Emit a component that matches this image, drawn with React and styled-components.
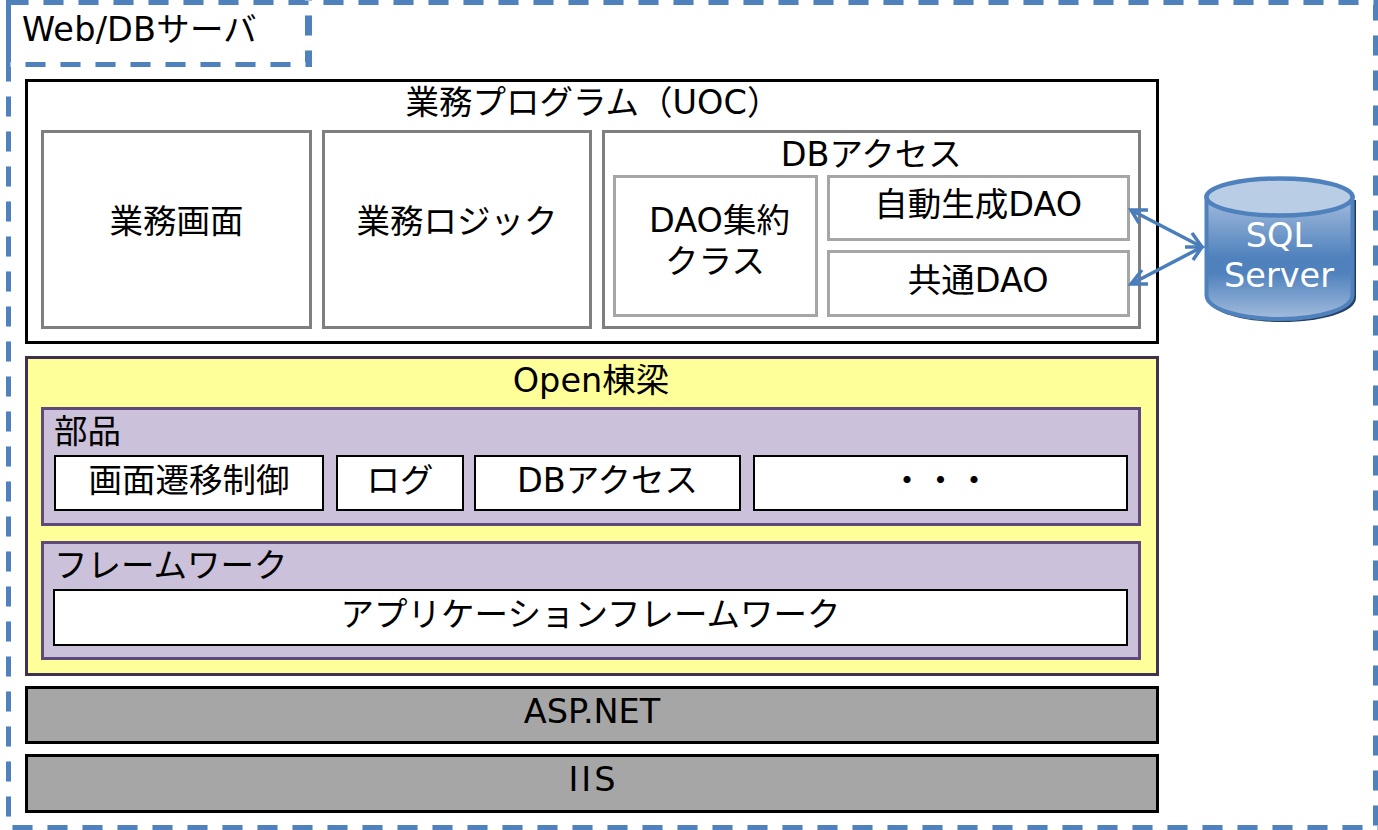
import React from "react";
import styled, { createGlobalStyle } from "styled-components";

const GlobalStyle = createGlobalStyle`
    html, body {
        margin: 0;
        padding: 0;
        background: #fff;
        overflow: hidden;
    }
`;

// one dash with the soft ends it has in the drawing
const dash = (angle, o) =>
    `repeating-linear-gradient(${angle}, #a0bcdd ${o}px, #a0bcdd ${o + 1}px, #4f81bd ${o + 1}px, #4f81bd ${o + 20}px, #a0bcdd ${o + 20}px, #a0bcdd ${o + 21}px, transparent ${o + 21}px, transparent ${o + 35}px)`;

const Page = styled.div`
    width: 1378px;
    height: 830px;
    box-sizing: border-box;
    padding-left: 6px;
    position: relative;
    overflow: hidden;
    font-family: "DejaVu Sans", "Noto Sans CJK JP", sans-serif;
    font-size: 33.5px;
    color: #000;
`;

const ServerFrame = styled.div`
    width: 1372px;
    height: 830px;
    box-sizing: border-box;
    padding: 79px 0 0 19px;
    display: flex;
    background-image: ${dash("90deg", -33)}, ${dash("90deg", -29)}, ${dash("180deg", -9)}, ${dash("180deg", 0)};
    background-size: 100% 5px, 100% 5px, 5px 100%, 5px 100%;
    background-position: 0 0, 0 100%, 0 0, 100% 0;
    background-repeat: no-repeat;
`;

const ServerLabel = styled.div`
    position: absolute;
    left: 6px;
    top: 0;
    width: 306px;
    height: 67px;
    box-sizing: border-box;
    padding: 8px 0 0 16px;
    line-height: 44px;
    letter-spacing: 0.2px;
    white-space: nowrap;
    background-image: ${dash("90deg", 19)}, ${dash("180deg", 15)};
    background-size: 100% 5px, 7px 100%;
    background-position: 0 100%, 100% 0;
    background-repeat: no-repeat;
`;

const LeftEdgeFill = styled.div`
    position: absolute;
    left: 6px;
    top: 0;
    width: 5px;
    height: 81px;
    background: #4f81bd;
`;

const Stack = styled.div`
    width: 1134px;
    display: flex;
    flex-direction: column;
    flex-shrink: 0;
`;

const ProgramBox = styled.div`
    height: 265px;
    box-sizing: border-box;
    border: 3px solid #000;
    background: #fff;
    padding: 0 15px 12px 13px;
    display: flex;
    flex-direction: column;
`;

const Heading = styled.div`
    height: ${(p) => p.$h}px;
    line-height: ${(p) => p.$lh}px;
    text-indent: ${(p) => p.$ti || 0}px;
    text-align: center;
    white-space: nowrap;
    flex-shrink: 0;
`;

const ProgramRow = styled.div`
    flex: 1;
    min-height: 0;
    display: flex;
    gap: 10px;
`;

const ProgramCell = styled.div`
    width: ${(p) => p.$w}px;
    box-sizing: border-box;
    border: 3.5px solid #7f7f7f;
    background: #fff;
    display: flex;
    align-items: center;
    justify-content: center;
    padding-bottom: 16px;
    line-height: 40px;
    white-space: nowrap;
`;

const AccessCell = styled.div`
    width: 539px;
    box-sizing: border-box;
    border: 3.5px solid #7f7f7f;
    background: #fff;
    padding: 0 8px 9px 7.5px;
    display: flex;
    flex-direction: column;
`;

const AccessRow = styled.div`
    flex: 1;
    min-height: 0;
    display: flex;
    gap: 9px;
`;

const DaoColumn = styled.div`
    flex: 1;
    min-height: 0;
    display: flex;
    flex-direction: column;
    gap: 9px;
`;

const DaoBox = styled.div`
    width: ${(p) => (p.$w ? `${p.$w}px` : "auto")};
    flex: ${(p) => (p.$w ? "none" : "1 1 0")};
    min-height: 0;
    box-sizing: border-box;
    border: 3px solid #a6a6a6;
    background: #fff;
    display: flex;
    align-items: center;
    justify-content: center;
    text-align: center;
    padding-bottom: ${(p) => p.$pb || 6}px;
    line-height: 40px;
    white-space: nowrap;
`;

const DaoLines = styled.div`
    line-height: 41px;
    text-indent: 9px;
`;

const OpenBox = styled.div`
    height: 320px;
    margin-top: 12px;
    box-sizing: border-box;
    border: 3px solid #403152;
    background: #ffff99;
    padding: 0 15px 0 13px;
`;

const GroupBox = styled.div`
    height: 119px;
    box-sizing: border-box;
    border: 3px solid #5f497a;
    background: #ccc1da;
    margin-bottom: 15px;
    padding: 0 10px;
`;

const GroupTitle = styled.div`
    height: 45px;
    line-height: 43px;
    white-space: nowrap;
`;

const ItemRow = styled.div`
    display: flex;
`;

const Item = styled.div`
    width: ${(p) => (p.$w ? `${p.$w}px` : "auto")};
    flex: ${(p) => (p.$w ? "none" : 1)};
    margin-left: ${(p) => p.$ml || 0}px;
    height: ${(p) => p.$h || 56}px;
    box-sizing: border-box;
    border: 2px solid #000;
    background: #fff;
    text-align: center;
    line-height: 47px;
    white-space: nowrap;
`;

const PlatformBar = styled.div`
    height: ${(p) => p.$h}px;
    margin-top: 10px;
    box-sizing: border-box;
    border: 3px solid #000;
    background: #a6a6a6;
    text-align: center;
    line-height: 45px;
    letter-spacing: ${(p) => p.$ls || 0}px;
    text-indent: ${(p) => p.$ls || 0}px;
`;

const Database = styled.div`
    position: absolute;
    left: 1204px;
    top: 176px;
    width: 153px;
    height: 147px;
`;

const DatabaseLabel = styled.div`
    position: absolute;
    left: 0;
    right: 3px;
    top: 40px;
    text-align: center;
    color: #fff;
    line-height: 40px;
`;

const ArrowLayer = styled.svg`
    position: absolute;
    left: 1125px;
    top: 200px;
`;

function CylinderShape() {
    return (
        <svg width="153" height="147" viewBox="0 0 153 147">
            <defs>
                <linearGradient id="body" x1="0" y1="0" x2="0" y2="1">
                    <stop offset="0" stopColor="#a3bcdc" />
                    <stop offset="0.5" stopColor="#4f81bd" />
                    <stop offset="0.62" stopColor="#4f81bd" />
                    <stop offset="1" stopColor="#a3bcdc" />
                </linearGradient>
            </defs>
            <path d="M4 24 V122 C4 136 38 146 78 146 C118 146 152 136 152 122 V24 Z" fill="#254061" />
            <path d="M2.5 21 V119 C2.5 133 36 143 75.5 143 C115 143 148.5 133 148.5 119 V21 Z" fill="url(#body)" stroke="#4f81bd" strokeWidth="4" />
            <ellipse cx="75.5" cy="21" rx="73" ry="18.5" fill="#b9cde5" stroke="#4f81bd" strokeWidth="4.5" />
        </svg>
    );
}

function Arrows() {
    return (
        <ArrowLayer width="84" height="92" viewBox="0 0 84 92" fill="none" stroke="#4a7ebb" strokeWidth="3.5">
            <path d="M6 10 L77 47 L6 84" />
            <path d="M23 10 H6 L14 23" />
            <path d="M67 33 L77 47 L68 60" />
            <path d="M60 47 H77" />
            <path d="M23 84 H6 L17 70" />
        </ArrowLayer>
    );
}

export default function App() {
    return (
        <Page>
            <GlobalStyle />
            <ServerFrame>
                <Stack>
                    <ProgramBox>
                        <Heading $h={48} $lh={42} $ti={4}>業務プログラム（UOC）</Heading>
                        <ProgramRow>
                            <ProgramCell $w={271}>業務画面</ProgramCell>
                            <ProgramCell $w={270}>業務ロジック</ProgramCell>
                            <AccessCell>
                                <Heading $h={41.5} $lh={43}>DBアクセス</Heading>
                                <AccessRow>
                                    <DaoBox $w={205} $pb={9}>
                                        <DaoLines>DAO集約<br />クラス</DaoLines>
                                    </DaoBox>
                                    <DaoColumn>
                                        <DaoBox>自動生成DAO</DaoBox>
                                        <DaoBox>共通DAO</DaoBox>
                                    </DaoColumn>
                                </AccessRow>
                            </AccessCell>
                        </ProgramRow>
                    </ProgramBox>
                    <OpenBox>
                        <Heading $h={48} $lh={43}>Open棟梁</Heading>
                        <GroupBox>
                            <GroupTitle>部品</GroupTitle>
                            <ItemRow>
                                <Item $w={270}>画面遷移制御</Item>
                                <Item $w={128} $ml={12}>ログ</Item>
                                <Item $w={267} $ml={10}>DBアクセス</Item>
                                <Item $ml={12}>・・・</Item>
                            </ItemRow>
                        </GroupBox>
                        <GroupBox>
                            <GroupTitle>フレームワーク</GroupTitle>
                            <Item $h={57} $ml={-1}>アプリケーションフレームワーク</Item>
                        </GroupBox>
                    </OpenBox>
                    <PlatformBar $h={58}>ASP.NET</PlatformBar>
                    <PlatformBar $h={59} $ls={3}>IIS</PlatformBar>
                </Stack>
            </ServerFrame>
            <LeftEdgeFill />
            <ServerLabel>Web/DBサーバ</ServerLabel>
            <Arrows />
            <Database>
                <CylinderShape />
                <DatabaseLabel>SQL<br />Server</DatabaseLabel>
            </Database>
        </Page>
    );
}
